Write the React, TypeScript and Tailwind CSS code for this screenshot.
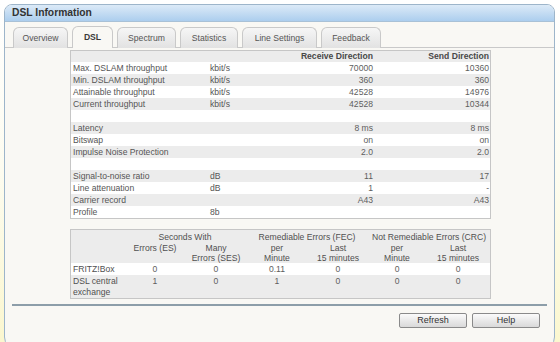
import React from "react";

const font = { fontFamily: '"Liberation Sans", Arial, sans-serif' };

const tabs = [
  { label: "Overview", w: "w-[55px]" },
  { label: "DSL", w: "w-[41px]", active: true },
  { label: "Spectrum", w: "w-[59px]" },
  { label: "Statistics", w: "w-[58px]" },
  { label: "Line Settings", w: "w-[75px]" },
  { label: "Feedback", w: "w-[60px]" },
];

const rows: string[][] = [
  ["Max. DSLAM throughput", "kbit/s", "70000", "10360"],
  ["Min. DSLAM throughput", "kbit/s", "360", "360"],
  ["Attainable throughput", "kbit/s", "42528", "14976"],
  ["Current throughput", "kbit/s", "42528", "10344"],
  ["", "", "", ""],
  ["Latency", "", "8 ms", "8 ms"],
  ["Bitswap", "", "on", "on"],
  ["Impulse Noise Protection", "", "2.0", "2.0"],
  ["", "", "", ""],
  ["Signal-to-noise ratio", "dB", "11", "17"],
  ["Line attenuation", "dB", "1", "-"],
  ["Carrier record", "", "A43", "A43"],
  ["Profile", "8b", "", ""],
];

const errRows = [
  { label: ["FRITZ!Box"], vals: ["0", "0", "0.11", "0", "0", "0"], bg: "bg-white" },
  { label: ["DSL central", "exchange"], vals: ["1", "0", "1", "0", "0", "0"], bg: "bg-[#ececec]" },
];

function Tab({ label, w, active }: { label: string; w: string; active?: boolean }) {
  return (
    <div
      className={`${w} -mb-px flex items-center justify-center rounded-t-[6px] border border-b-0 border-[#c9c9c9] text-[8.6px] ${
        active
          ? "bg-[#f9f8f4] font-bold text-[#3a3a3a] h-[22px]"
          : "h-[21px] bg-gradient-to-b from-[#f6f6f6] to-[#e2e2e2] text-[#555]"
      }`}
    >
      {label}
    </div>
  );
}

function DslTable() {
  return (
    <div className="w-[421px] border border-[#c6c6c6] text-[8.6px] text-[#5e5e5e]">
      <table className="w-full table-fixed border-collapse">
        <colgroup>
          <col className="w-[139px]" />
          <col className="w-[90px]" />
          <col className="w-[75px]" />
          <col className="w-[115px]" />
        </colgroup>
        <tbody>
          <tr className="h-[11px] bg-[#ececec] font-bold text-[#484848] leading-[11px]">
            <td />
            <td />
            <td className="text-right pr-[2px] whitespace-nowrap">Receive Direction</td>
            <td className="text-right pr-[1px]">Send Direction</td>
          </tr>
          {rows.map((r, i) => (
            <tr key={i} className={`h-[12px] leading-[12px] ${i % 2 === 0 ? "bg-white" : "bg-[#ececec]"}`}>
              <td className="pl-[2px] text-[#555] whitespace-nowrap">{r[0]}</td>
              <td className="text-[#555]">{r[1]}</td>
              <td className="text-right pr-[2px]">{r[2]}</td>
              <td className="text-right pr-[1px]">{r[3]}</td>
            </tr>
          ))}
        </tbody>
      </table>
    </div>
  );
}

function ErrorTable() {
  return (
    <div className="w-[421px] border border-[#c6c6c6] text-[8.6px] text-[#505050]">
      <table className="w-full table-fixed border-collapse">
        <colgroup>
          <col className="w-[53px]" />
          <col className="w-[62px]" />
          <col className="w-[60px]" />
          <col className="w-[62px]" />
          <col className="w-[60px]" />
          <col className="w-[58px]" />
          <col className="w-[64px]" />
        </colgroup>
        <tbody>
          <tr className="bg-[#ececec] h-[13px] leading-[12px] text-center align-bottom">
            <td />
            <td colSpan={2}>Seconds With</td>
            <td colSpan={2} className="whitespace-nowrap">Remediable Errors (FEC)</td>
            <td colSpan={2} className="whitespace-nowrap">Not Remediable Errors (CRC)</td>
          </tr>
          <tr className="bg-[#ececec] leading-[10px] text-center align-top">
            <td className="pb-[1px]" />
            <td>Errors (ES)</td>
            <td>
              Many
              <br />
              Errors (SES)
            </td>
            <td>
              per
              <br />
              Minute
            </td>
            <td>
              Last
              <br />
              15 minutes
            </td>
            <td>
              per
              <br />
              Minute
            </td>
            <td>
              Last
              <br />
              15 minutes
            </td>
          </tr>
          {errRows.map((r, i) => (
            <tr key={i} className={`${r.bg} leading-[11px] align-top`}>
              <td className="pl-[2px] whitespace-nowrap py-[0.5px]">
                {r.label.map((l, j) => (
                  <div key={j}>{l}</div>
                ))}
              </td>
              {r.vals.map((v, j) => (
                <td key={j} className="text-center text-[#5e5e5e] py-[0.5px]">
                  {v}
                </td>
              ))}
            </tr>
          ))}
        </tbody>
      </table>
    </div>
  );
}

function Button({ children }: { children: React.ReactNode }) {
  return (
    <button className="w-[68px] h-[15px] rounded-[2px] border border-[#8a8a8a] bg-gradient-to-b from-[#fbfbfb] to-[#d9d9d9] text-[9px] leading-[13px] text-[#333]">
      {children}
    </button>
  );
}

export default function App() {
  return (
    <div
      className="w-[560px] h-[342px] overflow-hidden bg-gradient-to-b from-white via-[#fdfcf0] to-[#fbf7cf] pt-[4px] pl-[4px]"
      style={font}
    >
      <div className="w-[551px] h-[345px] flex flex-col rounded-t-[8px] rounded-b-[12px] border border-[#9db5ca] bg-[#f9f8f4] overflow-hidden">
        <div className="h-[17px] shrink-0 border-b border-[#a9c1d6] bg-gradient-to-b from-[#dceaf7] to-[#acceee] pl-[7px] text-[10.3px] font-bold leading-[16px] text-[#333]">
          DSL Information
        </div>

        <div className="mt-[5px] flex items-end gap-[4px] border-b border-[#c9c9c9] pl-[8px] h-[21px]">
          {tabs.map((t) => (
            <Tab key={t.label} {...t} />
          ))}
        </div>

        <div className="pl-[65px] mt-[2px]">
          <DslTable />
          <div className="mt-[10px]">
            <ErrorTable />
          </div>
        </div>

        <div className="mt-[5px] mx-[7px] h-[2px] bg-[#8d9ea9]" />

        <div className="mt-[7px] flex justify-end gap-[5px] pr-[14px]">
          <Button>Refresh</Button>
          <Button>Help</Button>
        </div>
      </div>
    </div>
  );
}
